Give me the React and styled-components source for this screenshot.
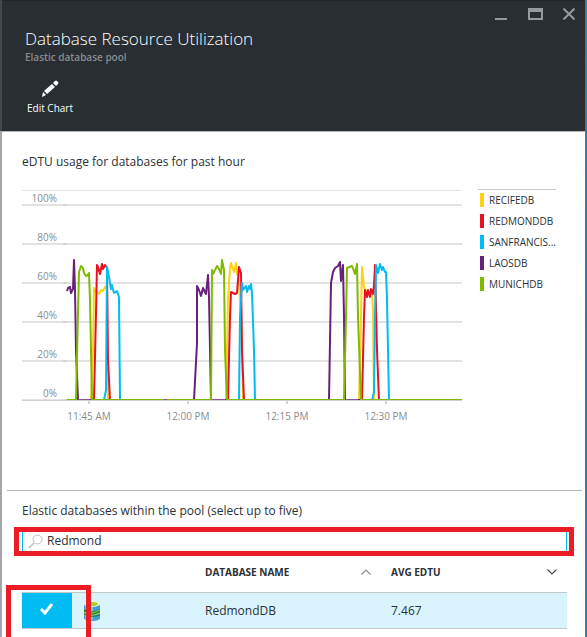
import React, { useState } from 'react';
import styled, { createGlobalStyle } from 'styled-components';

const GlobalStyle = createGlobalStyle`
  *, *::before, *::after { box-sizing: border-box; }
  body {
    margin: 0;
    background: #fff;
    color: #2b3135;
    font: 12px/16px 'Open Sans', 'Noto Sans', sans-serif;
  }
  button, input { font: inherit; color: inherit; }
`;

const Blade = styled.main`
  display: flex;
  min-height: 100vh;
  overflow: hidden;
`;

const Edge = styled.div`
  flex: none;
  width: 2px;
  background: ${(p) => p.$fill};
`;

const Pane = styled.div`
  flex: 1;
  min-width: 0;
`;

const Header = styled.header`
  display: flex;
  justify-content: space-between;
  align-items: flex-start;
  height: 132px;
  padding-left: 23px;
  background: #292e32;
  border-top: 1px solid #20252a;
  border-bottom: 1px solid #b4b6b8;
  color: #fff;
`;

const Title = styled.h1`
  margin: 26px 0 0;
  font-size: 17px;
  line-height: 24px;
  font-weight: 300;
  white-space: nowrap;
`;

const Subtitle = styled.p`
  margin: 0;
  font-size: 10px;
  line-height: 12px;
  font-weight: 600;
  color: #898d90;
`;

const CommandButton = styled.button`
  display: flex;
  flex-direction: column;
  align-items: center;
  gap: 3px;
  margin-top: 17px;
  padding: 0 2px;
  border: 0;
  background: none;
  font-size: 10px;
  line-height: 14px;
  cursor: pointer;
`;

const WindowControls = styled.div`
  display: flex;
  gap: 10px;
  padding: 1px 4px 0 0;
`;

const WindowButton = styled.button`
  display: grid;
  place-items: center;
  width: 24px;
  height: 24px;
  padding: 0;
  border: 0;
  background: none;
  cursor: pointer;
`;

const ChartSection = styled.section`
  margin: 0 3px 0 5px;
  padding: 22px 26px 0 15px;
  min-height: 359px;
  border-bottom: 1px solid #b4b4b4;
`;

const SectionTitle = styled.h2`
  margin: 0;
  font-size: 12px;
  line-height: 16px;
  font-weight: 400;
`;

const ChartRow = styled.div`
  display: flex;
  align-items: flex-start;
  gap: 16px;
  margin-top: 18px;
`;

const Plot = styled.svg`
  display: block;
  flex: 1;
  min-width: 0;
  font-size: 10px;
  fill: #898c90;
`;

const Legend = styled.ul`
  flex: none;
  width: 78px;
  margin: 1px 0 0;
  padding: 0;
  list-style: none;
  border-top: 1px solid #c8c8c8;
`;

const LegendItem = styled.li`
  display: flex;
  align-items: center;
  gap: 5px;
  height: 21px;
  padding: 0 0 1px 2px;
  font-size: 10px;
  line-height: 14px;
  white-space: nowrap;

  &::before {
    content: '';
    width: 4px;
    height: 14px;
    background: ${(p) => p.$color};
  }
`;

const DatabaseSection = styled.section`
  padding-top: 12px;
`;

const DatabaseTitle = styled(SectionTitle)`
  margin-left: 20px;
`;

const SearchCallout = styled.div`
  margin: 8px 11px 0 12px;
  padding: 0 2px 0 3px;
  border: 5px solid #ed1c24;
`;

const SearchBox = styled.label`
  display: flex;
  align-items: center;
  gap: 4px;
  height: 19px;
  padding-left: 5px;
  border: solid #00bcf2;
  border-width: 0 1px;
`;

const SearchInput = styled.input`
  flex: 1;
  min-width: 0;
  height: 19px;
  padding: 0 0 2px;
  border: 0;
  outline: 0;
  background: none;
`;

const TableFrame = styled.div`
  margin: 0 18px 0 20px;
`;

const Table = styled.table`
  width: 100%;
  table-layout: fixed;
  border-spacing: 0;
  text-align: left;
`;

const HeadCell = styled.th`
  width: ${(p) => p.$width || 'auto'};
  height: 36px;
  padding: 0 10px 4px;
  font-size: 10px;
  line-height: 14px;
  font-weight: 700;
`;

const SortButton = styled.button`
  display: flex;
  align-items: center;
  justify-content: space-between;
  width: 100%;
  padding: 0;
  border: 0;
  background: none;
  cursor: pointer;
`;

const Cell = styled.td`
  height: 37px;
  padding: 0 10px;
  background: #d9f4fd;
  border: solid #c3c8ca;
  border-width: 1px 0;
`;

const IconCell = styled(Cell)`
  padding-left: 12px;
`;

const CheckCell = styled(Cell)`
  position: relative;
  padding: 0;
  background: #00bcf2;

  &::after {
    content: '';
    position: absolute;
    inset: -8px -19px -18px -16px;
    border: 5px solid #ed1c24;
    pointer-events: none;
  }
`;

const CheckLabel = styled.label`
  display: grid;
  place-items: center;
  height: 35px;
  padding-bottom: 3px;
  cursor: pointer;

  > * { grid-area: 1 / 1; }
`;

const CheckInput = styled.input`
  appearance: none;
  width: 100%;
  height: 100%;
  margin: 0;
  cursor: pointer;

  &:not(:checked) + svg { visibility: hidden; }
`;

const Icon = styled.svg`
  display: block;
  flex: none;
`;

const series = [
  {
    name: 'RECIFEDB',
    color: '#fcd116',
    points:
      '67,400 91,400 93,350 94,288 96,292 99,294 101,290 103,291 105,287 107,289 107,345 108,400 226,400 228,300 230,268 231,263 234,272 236,263 237,274 238,270 241,317 243,400 359,400 361,317 362,267 364,287 366,291 372,292 373,310 374,400 462,400',
  },
  {
    name: 'REDMONDDB',
    color: '#e81123',
    points:
      '67,400 94,400 96,313 97,265 98,267 100,274 102,264 103,269 105,265 107,268 108,360 110,400 228,400 230,317 231,292 235,294 237,293 239,267 241,273 242,350 244,400 362,400 364,317 365,290 367,297 368,290 370,297 371,289 373,294 374,285 375,265 377,350 379,400 462,400',
  },
  {
    name: 'SANFRANCISCODB',
    label: 'SANFRANCIS...',
    color: '#00bcf2',
    points:
      '67,400 104,400 106,390 107,267 109,277 111,289 112,285 114,293 117,291 119,297 120,400 239,400 240,317 242,283 243,290 246,286 247,292 249,286 250,289 251,284 252,293 254,350 255,400 372,400 374,392 375,317 376,265 378,273 380,264 382,270 383,267 385,272 386,272 387,300 389,400 462,400',
  },
  {
    name: 'LAOSDB',
    color: '#68217a',
    points:
      '67,291 68,288 70,287 71,293 73,289 74,260 75,290 76,350 78,400 194,400 197,343 197,286 199,290 201,296 203,288 206,294 208,275 209,297 211,400 329,400 331,283 333,272 335,268 338,266 340,262 341,281 343,265 344,317 345,400 462,400',
  },
  {
    name: 'MUNICHDB',
    color: '#7fba00',
    points:
      '67,400 76,400 78,313 79,272 81,266 83,268 84,273 86,276 88,275 89,273 90,300 92,400 211,400 212,270 213,274 217,266 219,269 221,274 222,260 224,270 225,350 227,400 344,400 346,317 347,268 352,266 354,271 355,274 357,264 358,317 361,400 462,400',
  },
];

const levels = [100, 80, 60, 40, 20, 0];
const times = ['11:45 AM', '12:00 PM', '12:15 PM', '12:30 PM'];

function UsageChart() {
  return (
    <Plot viewBox="22 188 440 240" role="img" aria-label="eDTU usage for databases for past hour">
      <path d="M22 190.5H462" stroke="#e2e2e2" />
      {levels.map((level, i) => {
        const y = 205 + i * 39;
        return (
          <g key={level}>
            <path d={`M22 ${y}H462`} stroke="#e2e2e2" strokeWidth="2" />
            <path d={`M63 ${y}H67`} stroke="#d4d4d4" strokeWidth="2" />
            <text x="57" y={y - 3} textAnchor="end">{level}%</text>
          </g>
        );
      })}
      {times.map((time, i) => {
        const x = 89 + i * 99;
        return (
          <g key={time}>
            <path d={`M${x} 401V404`} stroke="#d4d4d4" strokeWidth="2" />
            <text x={x} y="420" textAnchor="middle">{time}</text>
          </g>
        );
      })}
      <g fill="none" strokeWidth="2" strokeLinejoin="round">
        {series.map((s) => (
          <polyline key={s.name} points={s.points} stroke={s.color} />
        ))}
      </g>
      <path d="M22 400.5H462" stroke="#d0d0d0" />
      <path d="M78 399.5H90M164 399.5H167M212 399.5H225M346 399.5H358" stroke="#8b559a" />
    </Plot>
  );
}

function PencilIcon() {
  return (
    <Icon width="18" height="18" viewBox="0 0 18 18" fill="#fff">
      <path d="M12 3l2-2q1-1 2 0l1 1q1 1 0 2l-2 2z" />
      <path d="M11 4l3 3-8 7-3-3z" />
      <path d="M2 12l3 3-4 2z" />
    </Icon>
  );
}

function SearchIcon() {
  return (
    <Icon width="15" height="15" viewBox="0 0 15 15" fill="none" stroke="#bcbcbc">
      <circle cx="9.5" cy="5.5" r="4.5" />
      <path d="M6 9L1 14" strokeWidth="1.5" />
    </Icon>
  );
}

function DatabaseIcon() {
  return (
    <Icon width="16" height="20" viewBox="0 0 16 20">
      <path d="M0 3v14c0 4 16 4 16 0V3z" fill="#3f9fd0" />
      <path d="M1 4v13c1 2 5 3 8 2V5z" fill="#69c2e9" />
      <ellipse cx="8" cy="3" rx="8" ry="3" fill="#e8f6ce" />
      <ellipse cx="8" cy="3" rx="6" ry="2" fill="#a4cf2c" />
      <path d="M0 8q8 5 16 0v3q-8 5-16 0z" fill="#168039" />
      <path d="M0 11q8 3 16-2M0 14q9 2 16-2" fill="none" stroke="#a4cf2c" />
      <path d="M0 13q8 4 16 1" fill="none" stroke="#168039" />
    </Icon>
  );
}

function Chevron({ up }) {
  return (
    <Icon width="10" height="6" viewBox="0 0 10 6" fill="none" stroke={up ? '#8a8d90' : '#4a4f54'}>
      <path d={up ? 'M.5 5.5L5 1l4.5 4.5' : 'M.5.5L5 5 9.5.5'} strokeWidth="1.2" />
    </Icon>
  );
}

export default function App() {
  const [query, setQuery] = useState('Redmond');
  const [checked, setChecked] = useState(true);

  return (
    <>
      <GlobalStyle />
      <Blade>
        <Edge $fill="linear-gradient(#42474b 131px, #a6a6a6 131px)" />
        <Pane>
          <Header>
            <div>
              <Title>Database Resource Utilization</Title>
              <Subtitle>Elastic database pool</Subtitle>
              <CommandButton type="button">
                <PencilIcon />
                Edit Chart
              </CommandButton>
            </div>
            <WindowControls>
              <WindowButton type="button" aria-label="Minimize">
                <Icon width="14" height="14" fill="#969a9c">
                  <path d="M1 11h12v2H1z" />
                </Icon>
              </WindowButton>
              <WindowButton type="button" aria-label="Maximize">
                <Icon width="15" height="12" fill="#969a9c" fillRule="evenodd">
                  <path d="M0 0h15v12H0zM2 4v6h11V4z" />
                </Icon>
              </WindowButton>
              <WindowButton type="button" aria-label="Close">
                <Icon width="12" height="12" stroke="#969a9c" strokeWidth="2">
                  <path d="M.5.5l11 11M11.5.5l-11 11" />
                </Icon>
              </WindowButton>
            </WindowControls>
          </Header>

          <ChartSection>
            <SectionTitle>eDTU usage for databases for past hour</SectionTitle>
            <ChartRow>
              <UsageChart />
              <Legend>
                {series.map((s) => (
                  <LegendItem key={s.name} $color={s.color}>{s.label || s.name}</LegendItem>
                ))}
              </Legend>
            </ChartRow>
          </ChartSection>

          <DatabaseSection>
            <DatabaseTitle>Elastic databases within the pool (select up to five)</DatabaseTitle>
            <SearchCallout>
              <SearchBox>
                <SearchIcon />
                <SearchInput
                  aria-label="Search databases"
                  value={query}
                  onChange={(e) => setQuery(e.target.value)}
                />
              </SearchBox>
            </SearchCallout>
            <TableFrame>
              <Table>
                <thead>
                  <tr>
                    <HeadCell $width="50px" aria-label="Selected" />
                    <HeadCell $width="123px" aria-label="Type" />
                    <HeadCell>
                      <SortButton type="button">DATABASE NAME<Chevron up /></SortButton>
                    </HeadCell>
                    <HeadCell>
                      <SortButton type="button">AVG EDTU<Chevron /></SortButton>
                    </HeadCell>
                  </tr>
                </thead>
                <tbody>
                  <tr>
                    <CheckCell>
                      <CheckLabel>
                        <CheckInput
                          type="checkbox"
                          aria-label="Select RedmondDB"
                          checked={checked}
                          onChange={(e) => setChecked(e.target.checked)}
                        />
                        <Icon width="14" height="12" viewBox="0 0 14 12" fill="none" stroke="#fff" strokeWidth="3">
                          <path d="M1 6l4 4 7-9" />
                        </Icon>
                      </CheckLabel>
                    </CheckCell>
                    <IconCell><DatabaseIcon /></IconCell>
                    <Cell>RedmondDB</Cell>
                    <Cell>7.467</Cell>
                  </tr>
                </tbody>
              </Table>
            </TableFrame>
          </DatabaseSection>
        </Pane>
        <Edge $fill="linear-gradient(#2b83b5, #34779e 50%, #2f7fae)" />
      </Blade>
    </>
  );
}
